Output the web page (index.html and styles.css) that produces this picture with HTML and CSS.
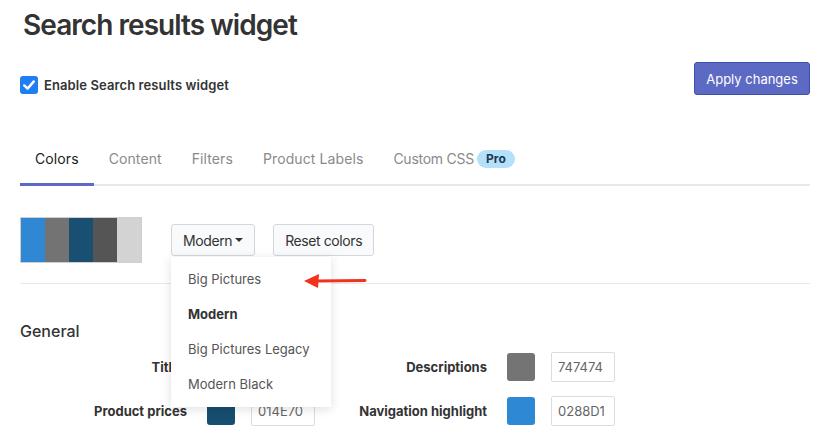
FILE: index.html
```html
<!DOCTYPE html>
<html>
<head>
<meta charset="utf-8">
<link rel="stylesheet" href="styles.css">
</head>
<body>
<div class="page">
  <div class="header">
    <div class="header-left">
      <h1 class="title">Search results widget</h1>
      <label class="enable">
        <span class="checkbox">
          <svg viewBox="0 0 18 18" width="18" height="18"><rect x="0" y="0" width="18" height="18" rx="3" fill="#1f7ef2"/><path d="M4.2 9.4 L7.6 12.6 L13.8 5.4" fill="none" stroke="#fff" stroke-width="2.4" stroke-linecap="round" stroke-linejoin="round"/></svg>
        </span>
        Enable Search results widget
      </label>
    </div>
    <button class="apply">Apply changes</button>
  </div>

  <div class="tabs">
    <div class="tab active">Colors</div>
    <div class="tab">Content</div>
    <div class="tab">Filters</div>
    <div class="tab">Product Labels</div>
    <div class="tab tab-custom">Custom CSS <span class="pro">Pro</span></div>
  </div>

  <div class="palette-row">
    <div class="palette">
      <span class="chip c1"></span><span class="chip c2"></span><span class="chip c3"></span><span class="chip c4"></span><span class="chip c5"></span>
    </div>
    <div class="dd-wrap">
      <button class="btn">Modern <span class="caret"></span></button>
      <div class="dropdown">
        <div class="dd-item">Big Pictures</div>
        <div class="dd-item selected">Modern</div>
        <div class="dd-item">Big Pictures Legacy</div>
        <div class="dd-item">Modern Black</div>
      </div>
      <svg class="arrow" viewBox="0 0 64 16" width="64" height="16"><path d="M13 8 L61 7.5" stroke="#f2321e" stroke-width="2.8" stroke-linecap="round"/><path d="M0 8 L15 1 L14 15 Z" fill="#f2321e"/></svg>
    </div>
    <button class="btn reset">Reset colors</button>
  </div>

  <div class="divider"></div>

  <h2 class="section">General</h2>

  <div class="grid">
    <div class="field"><span class="label">Titles</span><span class="swatch" style="background:#555555"></span><span class="input">555555</span></div>
    <div class="field"><span class="label">Descriptions</span><span class="swatch" style="background:#747474"></span><span class="input">747474</span></div>
    <div class="field"><span class="label">Product prices</span><span class="swatch" style="background:#174e6f"></span><span class="input">014E70</span></div>
    <div class="field"><span class="label">Navigation highlight</span><span class="swatch" style="background:#2f88d3"></span><span class="input">0288D1</span></div>
  </div>
</div>
</body>
</html>
```
FILE: styles.css
```css
html, body {
  margin: 0;
  padding: 0;
  background: #fff;
}
body {
  font-family: Inter, "Liberation Sans", sans-serif;
  color: #333;
  width: 821px;
  height: 436px;
  overflow: hidden;
}
.page {
  padding: 0 11px 0 20px;
}
.header {
  display: flex;
  justify-content: space-between;
  align-items: flex-start;
}
.title {
  margin: 0;
  padding: 8px 0 0 3px;
  font-size: 28px;
  line-height: 34px;
  font-weight: 600;
  color: #333;
  letter-spacing: -0.95px;
}
.enable {
  display: flex;
  align-items: center;
  gap: 6px;
  margin-top: 34px;
  height: 18px;
  font-size: 13px;
  font-weight: 600;
  color: #333;
  letter-spacing: 0.1px;
}
.checkbox {
  display: block;
  width: 18px;
  height: 18px;
}
.checkbox svg { display: block; }
.apply {
  margin-top: 62px;
  width: 116px;
  height: 33px;
  background: #5c6ac4;
  border: 1px solid #3f4eae;
  border-radius: 3px;
  color: #fff;
  font-family: inherit;
  font-size: 13px;
  padding: 0;
}
.tabs {
  display: flex;
  margin-top: 40px;
  border-bottom: 2px solid #e8e8e8;
}
.tab {
  position: relative;
  padding: 14px 15px 15px;
  font-size: 14px;
  line-height: 20px;
  color: #8a8a8a;
  display: flex;
  align-items: center;
  letter-spacing: 0.1px;
}
.tab-custom {
  letter-spacing: -0.25px;
}
.tab.active {
  color: #222;
}
.tab.active::after {
  content: "";
  position: absolute;
  left: 0;
  right: 0;
  bottom: -2px;
  height: 3px;
  background: #5c6ac4;
}
.pro {
  display: inline-block;
  margin-left: 3px;
  background: #b4e0fa;
  color: #1e3a52;
  font-size: 12px;
  font-weight: 700;
  line-height: 18px;
  height: 18px;
  padding: 0 9px;
  border-radius: 9px;
  letter-spacing: 0;
}
.palette-row {
  display: flex;
  align-items: flex-start;
  margin-top: 31px;
}
.palette {
  display: flex;
  border: 1px solid #cfcfcf;
  height: 44px;
}
.chip {
  display: block;
  width: 24px;
  height: 44px;
}
.c1 { background: #3088d4; }
.c2 { background: #737373; }
.c3 { background: #194f70; }
.c4 { background: #555555; }
.c5 { background: #d3d3d3; }
.dd-wrap {
  position: relative;
  margin-left: 29px;
  margin-top: 7px;
}
.btn {
  display: flex;
  align-items: center;
  height: 32px;
  padding: 0 11px;
  background: #f9fafb;
  border: 1px solid #d3d7db;
  border-radius: 3px;
  font-family: inherit;
  font-size: 14px;
  color: #333;
  letter-spacing: -0.4px;
}
.caret {
  display: inline-block;
  margin-left: 3px;
  width: 0;
  height: 0;
  border-left: 4px solid transparent;
  border-right: 4px solid transparent;
  border-top: 4px solid #333;
}
.reset {
  margin-left: 18px;
  margin-top: 7px;
}
.dropdown {
  position: absolute;
  top: 33px;
  left: 0;
  width: 160px;
  padding: 5px 0;
  background: #fff;
  box-shadow: 0 2px 10px rgba(0,0,0,0.13);
  z-index: 5;
}
.dd-item {
  height: 35px;
  line-height: 34px;
  padding-left: 17px;
  font-size: 13px;
  color: #555;
}
.dd-item.selected {
  font-weight: 700;
  color: #333;
}
.arrow {
  position: absolute;
  left: 133px;
  top: 49px;
  z-index: 6;
}
.divider {
  margin-top: 20px;
  height: 1px;
  background: #e8e8e8;
}
.section {
  margin: 36px 0 0;
  font-size: 16px;
  line-height: 22px;
  font-weight: 500;
  color: #333;
}
.grid {
  display: grid;
  grid-template-columns: 300px 300px;
  row-gap: 14px;
  margin-top: 10px;
}
.field {
  display: flex;
  align-items: center;
  height: 30px;
}
.label {
  width: 167px;
  text-align: right;
  font-size: 13px;
  font-weight: 700;
  color: #333;
}
.swatch {
  display: block;
  width: 28px;
  height: 28px;
  border-radius: 3px;
  margin-left: 20px;
}
.input {
  display: flex;
  align-items: center;
  box-sizing: border-box;
  width: 64px;
  height: 30px;
  margin-left: 16px;
  padding-left: 6px;
  border: 1px solid #dcdcdc;
  border-radius: 2px;
  font-size: 13px;
  color: #666;
}
```
